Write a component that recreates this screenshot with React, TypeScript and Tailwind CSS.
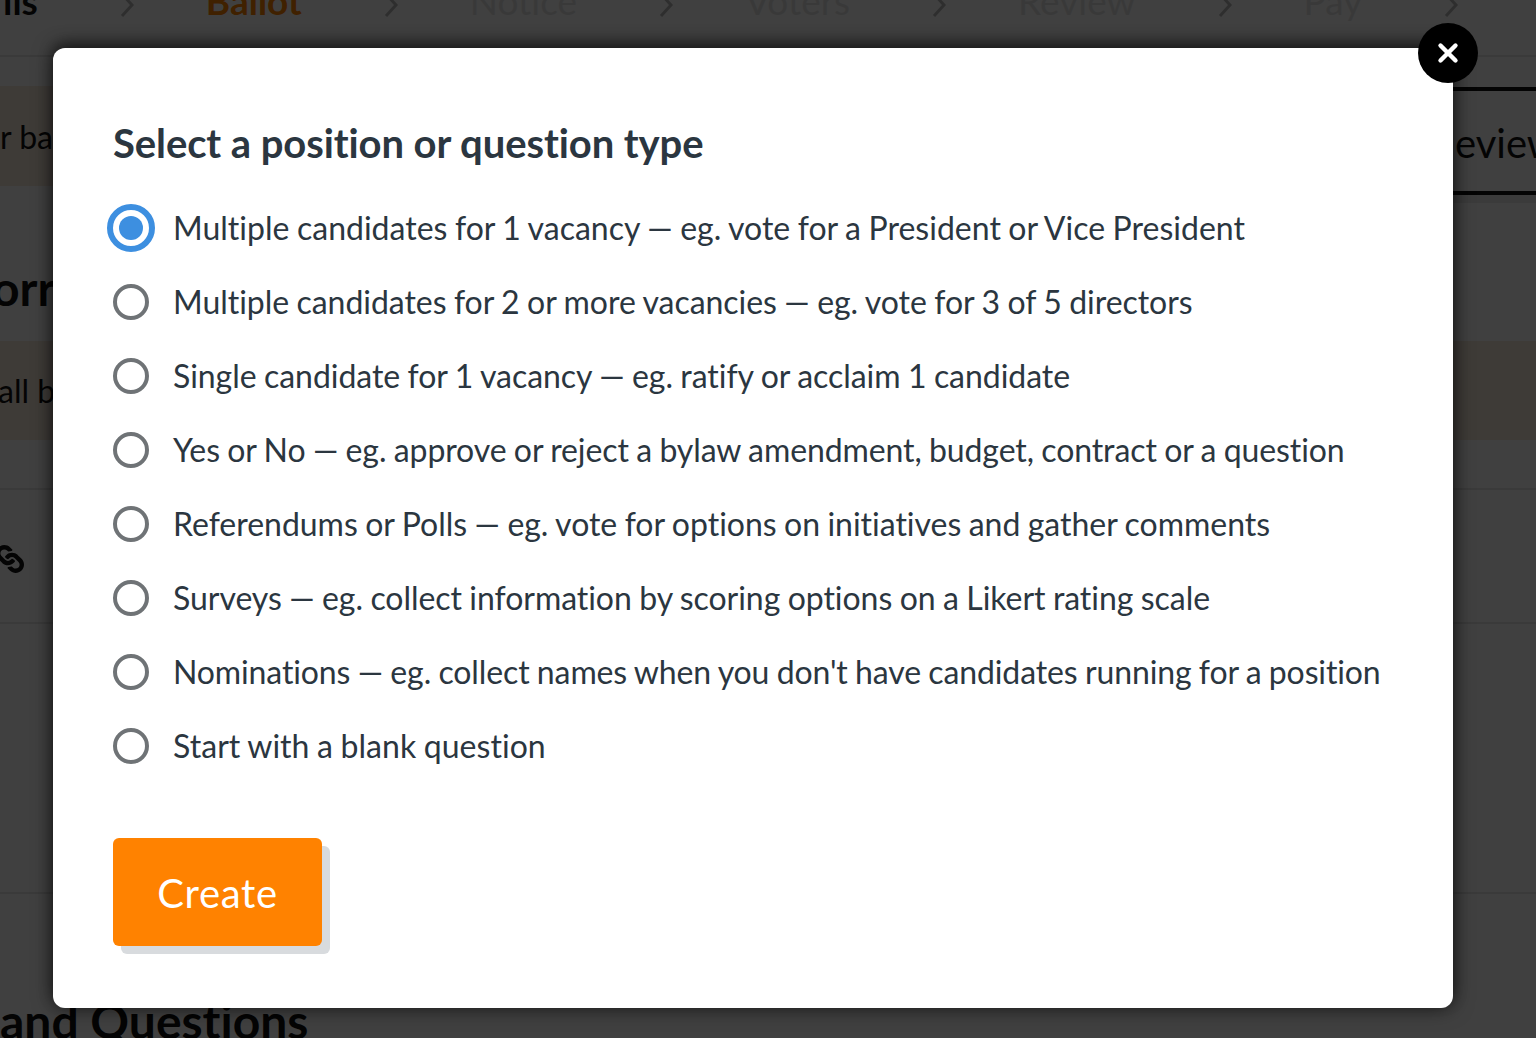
import { X } from 'lucide-react';
import { FaLink } from 'react-icons/fa';

const steps = [
  { label: 'ils', className: 'ml-[3px] font-bold text-[#111]' },
  { label: 'Ballot', className: 'font-bold text-[#ff8200]' },
  { label: 'Notice', className: 'text-[#e4e4e4]' },
  { label: 'Voters', className: 'text-[#e4e4e4]' },
  { label: 'Review', className: 'text-[#e4e4e4]' },
  { label: 'Pay', className: 'text-[#e4e4e4]' },
];

const options = [
  { label: 'Multiple candidates for 1 vacancy — eg. vote for a President or Vice President', fit: 'tracking-[0.01px]' },
  { label: 'Multiple candidates for 2 or more vacancies — eg. vote for 3 of 5 directors', fit: 'tracking-[-0.04px]' },
  { label: 'Single candidate for 1 vacancy — eg. ratify or acclaim 1 candidate', fit: 'tracking-[-0.045px]' },
  { label: 'Yes or No — eg. approve or reject a bylaw amendment, budget, contract or a question', fit: 'tracking-[-0.1px]' },
  { label: 'Referendums or Polls — eg. vote for options on initiatives and gather comments', fit: 'tracking-[-0.025px]' },
  { label: 'Surveys — eg. collect information by scoring options on a Likert rating scale', fit: 'tracking-[-0.05px]' },
  { label: "Nominations — eg. collect names when you don't have candidates running for a position", fit: 'tracking-[-0.12px]' },
  { label: 'Start with a blank question', fit: 'tracking-[0.04px]' },
];

function Chevron() {
  return (
    <svg viewBox="0 0 18 26" className="ml-[80px] mr-[70px] mt-[8px] h-[26px] w-[18px] shrink-0 text-[#b8b8b8]" fill="none" stroke="currentColor" strokeWidth="3">
      <path d="M4 2l10 11L4 24" />
    </svg>
  );
}

function Stepper() {
  return (
    <div className="flex h-[57px] items-start overflow-hidden border-b-2 border-[#e6e6e6]">
      <div className="-mt-[19px] flex items-center text-[37px] leading-[40px]">
        {steps.map((step) => (
          <div key={step.label} className="flex items-center">
            <span className={step.className}>{step.label}</span>
            <Chevron />
          </div>
        ))}
      </div>
    </div>
  );
}

function Backdrop() {
  return (
    <div className="h-[1038px] overflow-hidden bg-white font-['Lato',sans-serif] text-[#111]">
      <Stepper />
      <div className="mt-[29px] flex h-[107px] items-start">
        <div className="flex h-[100px] flex-1 items-center bg-[#f7e9dc] pt-[2px] text-[32px]">r ballot</div>
        <div className="mt-[1px] flex h-[108px] w-[83px] items-center border-y-[4px] border-[#111] pt-[4px] text-[40px] shadow-[0_8px_0_#ececec]">
          <span className="ml-[2px]">eview</span>
        </div>
      </div>
      <div className="-ml-[8px] mt-[65px] h-[83px] text-[48px] font-bold leading-[60px]">orr</div>
      <div className="flex h-[99px] items-center bg-[#f7e9dc] text-[32px]">
        <span className="-ml-[2px]">all ballots</span>
      </div>
      <div className="mt-[48px] h-[136px] border-y-2 border-[#e6e6e6] pt-[55px] text-[#111]">
        <FaLink size={28} className="-ml-[4px] rotate-90" />
      </div>
      <div className="mt-[268px] h-[2px] bg-[#e6e6e6]" />
      <div className="mt-[97px] whitespace-nowrap text-[48px] font-bold leading-[60px]">and Questions</div>
    </div>
  );
}

function RadioMark({ checked }: { checked: boolean }) {
  if (checked) {
    return (
      <span className="-ml-[6px] mr-[18px] flex h-[48px] w-[48px] shrink-0 items-center justify-center rounded-full border-[6px] border-[#3d8fe0] bg-white">
        <span className="h-[24px] w-[24px] rounded-full bg-[#3d8fe0]" />
      </span>
    );
  }
  return <span className="mr-[24px] h-[36px] w-[36px] shrink-0 rounded-full border-[4px] border-[#6f7376] bg-white" />;
}

export default function App() {
  return (
    <div className="relative h-[1038px] w-[1536px] overflow-hidden [font-variant-ligatures:none]">
      <Backdrop />
      <div className="absolute inset-0 bg-black/75 pl-[53px] pt-[48px]">
        <div className="relative h-[960px] w-[1400px] rounded-[12px] bg-white px-[60px] pt-[69px] font-['Lato',sans-serif] shadow-[0_0_20px_rgba(0,0,0,0.6),0_-6px_14px_rgba(0,0,0,0.35)]">
          <button className="absolute -right-[25px] -top-[25px] flex h-[60px] w-[60px] items-center justify-center rounded-full bg-black text-white">
            <X size={30} strokeWidth={3.5} />
          </button>
          <h2 className="text-[40px] font-bold leading-[52px] tracking-[-0.09px] text-[#2b3640]">Select a position or question type</h2>
          <div className="mt-[22px] flex flex-col">
            {options.map((option, index) => (
              <label key={option.label} className={`flex h-[74px] items-center whitespace-nowrap text-[32px] text-[#2b3640] [word-spacing:-0.7px] ${option.fit}`}>
                <RadioMark checked={index === 0} />
                {option.label}
              </label>
            ))}
          </div>
          <button className="mt-[55px] block h-[108px] w-[209px] rounded-[6px] bg-[#ff8200] pt-[2px] text-[40px] tracking-[0.7px] text-white shadow-[8px_8px_0_#d8dbde]">
            Create
          </button>
        </div>
      </div>
    </div>
  );
}
